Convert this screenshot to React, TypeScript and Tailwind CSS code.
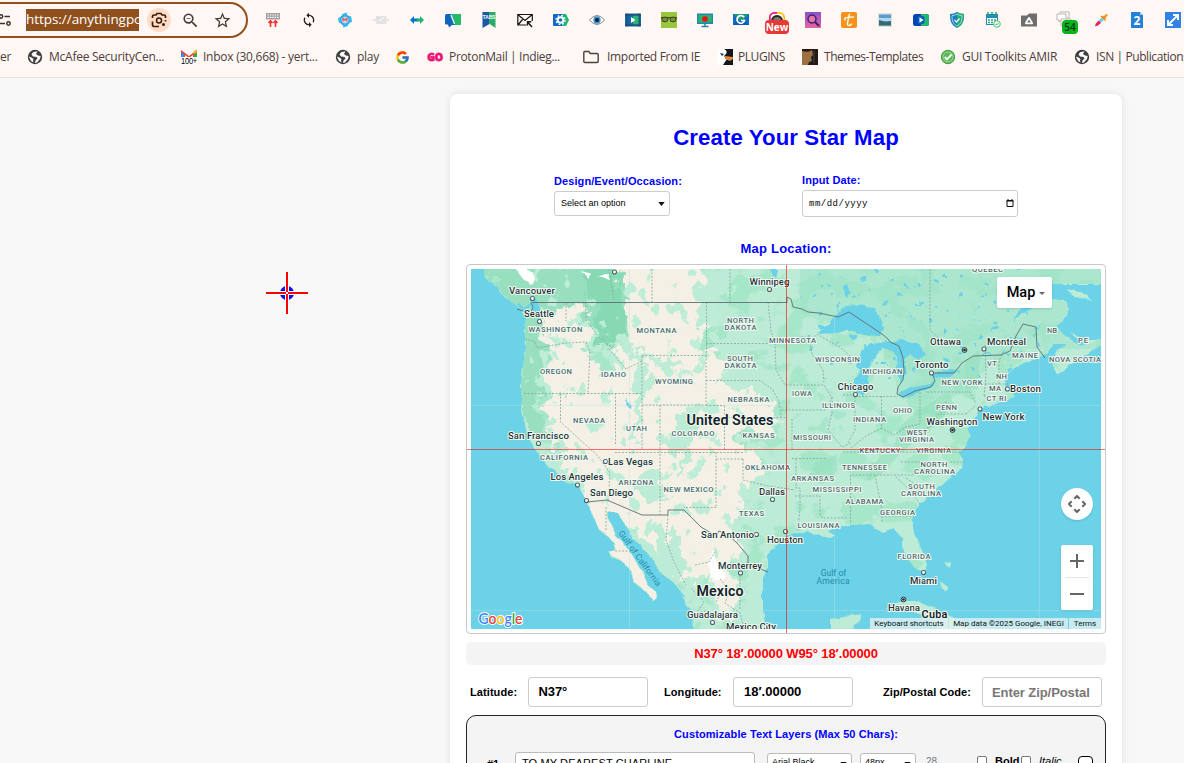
import React from 'react';
import { MdSync, MdStarBorder, MdZoomOut } from 'react-icons/md';
import { FcGoogle } from 'react-icons/fc';

type IconProps = { children: React.ReactNode; size?: number };

const Glyph = ({ children, size = 16 }: IconProps) => (
  <svg viewBox="0 0 16 16" width={size} height={size} className="shrink-0 overflow-visible">
    {children}
  </svg>
);

const Globe = () => (
  <Glyph>
    <circle cx="8" cy="8" r="7.2" fill="#3c4043" />
    <path d="M10.500 2.200 6 3.300 4.500 5.500 6 7.500 9.500 8 10.500 9.500 8.500 11.500 8 14l2-.5 3-3.500.7-3-2.700-.5-2-1.500zM1.800 7.500l2.700 1 2 1.500-.5 1.500.5 2-2.500-1.500z" fill="#fff8f5" />
  </Glyph>
);

const extensions: React.ReactNode[] = [
  <Glyph>
    <rect x="1" y="1" width="14" height="6.5" fill="#a3a3a3" />
    <path d="M2.5 3h11M2.5 5.3h11" stroke="#fff" strokeWidth="1.2" strokeDasharray="1.4 1" />
    <path d="M5.500 15V9M3.500 11l2-2.300 2 2.300M10.500 15V9M8.500 11l2-2.300 2 2.300" stroke="#f33434" strokeWidth="1.6" fill="none" />
  </Glyph>,
  <MdSync size={16} color="#26201e" />,
  <Glyph>
    <circle cx="8" cy="8" r="5.5" fill="#1aa5e8" />
    <path d="M5 2l5-1.500-.5 4H6zM1 6l4-1v5L2 11zM15 10l-4 1V5l3-1zM11 14l-5 1.500.5-4H10z" fill="#2eb4ef" />
    <circle cx="8" cy="8" r="3.5" fill="#c9cfe4" />
    <path d="M6 9.600V6.500L8 8l2-1.500v3.100" stroke="#da5964" strokeWidth="1.200" fill="none" />
  </Glyph>,
  <Glyph>
    <rect x="3" y="4" width="10.500" height="8" rx="1" fill="#e2e3e2" />
    <path d="m3.500 5 4.700 4L13 5M0 8h3m10.500 0H16" stroke="#ccd1d0" fill="none" />
    <path d="m6 7 2 2 4-4" stroke="#fff" fill="none" />
  </Glyph>,
  <Glyph>
    <path d="M1 8 5 4v2.500h4v3H5V12z" fill="#0874c5" />
    <path d="m15 8-4-4v2.500H8v3h3V12z" fill="#20b574" />
  </Glyph>,
  <Glyph>
    <path d="M1.500 2H15a1 1 0 0 1 1 1v9q0 1-1 1H7l-3 2.500-1-3H1Q0 12.500 0 11V3.500Q0 2 1.500 2z" fill="#1265bd" />
    <path d="M6 2h9a1 1 0 0 1 1 1v9q0 1-1 1H10z" fill="#26ba6d" />
    <path d="m6 3 3.500 9" stroke="#fff" strokeWidth="1.200" />
  </Glyph>,
  <Glyph>
    <path d="M1.500 0h7v12l-7 4z" fill="#1959a8" />
    <path d="M8 0h6.500v16L8 11.500z" fill="#2bad68" />
    <text x="8" y="7" fontSize="5.500" textAnchor="middle" textLength="12.500" lengthAdjust="spacingAndGlyphs" fontWeight="700" fill="#fff" fontFamily="Liberation Sans, sans-serif">TABS</text>
  </Glyph>,
  <Glyph>
    <path d="M9.500 13H.8V2.500h14.500V9M1 2.700l7 5.800 7-5.800M1 13l4.500-5.500" stroke="#151515" strokeWidth="1.200" fill="none" />
    <path d="M15 15 11 10.500M10.500 13.500V9.800h3.800" stroke="#151515" strokeWidth="1.400" fill="none" />
  </Glyph>,
  <Glyph>
    <path d="M1 2h8v12H1a1 1 0 0 1-1-1V3a1 1 0 0 1 1-1z" fill="#1265c3" />
    <path d="M9 2h4l3 6-3 6H9z" fill="#22b573" />
    <circle cx="7.500" cy="8" r="2.800" fill="none" stroke="#fff" strokeWidth="2" />
    <circle cx="7.500" cy="8" r="4.500" fill="none" stroke="#fff" strokeWidth="1.400" strokeDasharray="1.700 1.830" />
  </Glyph>,
  <Glyph>
    <path d="M.5 8Q8-1 15.500 8 8 17 .5 8z" fill="#fff" stroke="#5e666d" strokeWidth=".8" />
    <circle cx="8" cy="8" r="3.700" fill="#3f93cc" />
    <circle cx="8" cy="8" r="2" fill="#101d31" />
  </Glyph>,
  <Glyph>
    <path d="M0 1.500h16v13H0z" fill="#1766a8" />
    <path d="M8 3.500h6v9H8z" fill="#26b774" />
    <path d="M0 3h16M0 13h16M2 1.500v13m12-13v13" stroke="#25384d" strokeWidth=".7" />
    <path d="m6 5 4.500 3L6 11z" fill="#fff" />
  </Glyph>,
  <Glyph>
    <path d="M0 0h16v16H0z" fill="#98c63e" />
    <path d="M0 5h16v1.500H0z" fill="#435123" />
    <rect x="1" y="5.200" width="5.700" height="4.500" rx="2" fill="#7c8c40" stroke="#36441d" />
    <rect x="9.200" y="5.200" width="5.700" height="4.500" rx="2" fill="#7c8c40" stroke="#36441d" />
  </Glyph>,
  <Glyph>
    <rect y="1.500" width="16" height="10.500" fill="#2684b4" />
    <path d="M1.300 3h13.400v7.500H1.300z" fill="#2bb36c" />
    <path d="M4.500 14.500h7M8 12v2" stroke="#2684a4" strokeWidth="1.500" />
    <circle cx="8" cy="7" r="2.800" fill="#f00f18" />
  </Glyph>,
  <Glyph>
    <path d="M0 2h16v11H0z" fill="#126bc2" />
    <path d="m1 2h14l-4 6H5z" fill="#1d9c7d" />
    <path d="M0 13h16l-4-3H3z" fill="#075ab7" />
    <path d="M11 5.300a3.800 3.800 0 1 0 .5 3.200H8" fill="none" stroke="#fff" strokeWidth="1.700" />
  </Glyph>,
  <div className="relative flex h-6 w-6 items-start justify-center pt-1">
    <Glyph>
      <path d="M.8 8V5.500A4.800 4.800 0 0 1 5.500.8H8" stroke="#ed147b" strokeWidth="1.700" fill="none" />
      <path d="M8 .8h2.500a4.800 4.800 0 0 1 4.700 4.700V8" stroke="#ffc107" strokeWidth="1.700" fill="none" />
      <path d="M3 9a5 5 0 0 1 10 0" fill="#777" stroke="#252525" strokeWidth="2" />
    </Glyph>
    <span className="absolute left-0 top-3 flex h-[14px] w-6 items-center justify-center rounded-[4px] bg-[#e53935] font-['Open_Sans',sans-serif] text-[10px] font-bold leading-none text-white">New</span>
  </div>,
  <Glyph>
    <defs>
      <linearGradient id="violet" x2="0" y2="1"><stop stopColor="#8952c9" /><stop offset="1" stopColor="#e765a0" /></linearGradient>
    </defs>
    <path d="M0 0h16v16H0z" fill="url(#violet)" />
    <circle cx="7" cy="7" r="4" fill="#db70b0" stroke="#42206e" strokeWidth="1.500" />
    <path d="m10 10 4 4" stroke="#39205f" strokeWidth="2" />
    <circle cx="7" cy="7" r="1.600" fill="#f17c89" />
  </Glyph>,
  <Glyph>
    <rect width="16" height="16" rx="2" fill="#f6911d" />
    <path d="M8.500 2.200 6.500 11q-.6 3.500 3 2l1-1M4 8q-1-2.500 2-2.500L12.500 5" fill="none" stroke="#fff6dc" strokeWidth="1.500" strokeLinecap="round" />
  </Glyph>,
  <Glyph>
    <path d="M1 1h14v14H1z" fill="#d9e1e2" />
    <path d="M2 2.500h12v11H2z" fill="#5b9bd0" />
    <path d="M2 6h12v3H2z" fill="#b2d8eb" />
    <path d="M2 8 9 10l5-1v4.500H2z" fill="#356c70" />
  </Glyph>,
  <Glyph>
    <rect y="2" width="16" height="12" rx="2.500" fill="#0645b7" />
    <path d="M8 2h5.500A2.500 2.500 0 0 1 16 4.500v7a2.500 2.500 0 0 1-2.500 2.500H8z" fill="#26b674" />
    <rect x="4.500" y="4" width="7" height="8" rx="2" fill="#0760b4" />
    <path d="m6.500 5.300 4 2.700-4 2.700z" fill="#fff" />
  </Glyph>,
  <Glyph>
    <path d="M8 0q3 2 7 2c0 7-1 11-7 14C2 13 1 9 1 2q4 0 7-2z" fill="#187fc3" />
    <path d="M8 0q3 2 7 2c0 7-1 11-7 14z" fill="#28a978" />
    <path d="M8 2q2 1.500 5 1.500C13 9 12 12 8 14 4 12 3 9 3 3.500Q6 3.500 8 2z" fill="none" stroke="#bde8ef" strokeWidth=".8" />
    <path d="m5.500 8 2 2L10.500 6.500" stroke="#e7fff5" strokeWidth="1.300" fill="none" />
  </Glyph>,
  <Glyph>
    <path d="M1 2h12v11H1z" fill="#208db5" />
    <path d="M2 6h10v6H2z" fill="#fff" />
    <path d="M3 8h8M3 10.500h8M3 0v4m4-4v4m4-4v4" stroke="#26a487" strokeWidth="1.500" strokeDasharray="2 1" />
    <circle cx="12" cy="12" r="3.300" fill="#ebfff0" stroke="#4bc37b" />
    <path d="m10.500 12 1 1 2-2" stroke="#3fae65" fill="none" />
  </Glyph>,
  <Glyph>
    <path d="M0 3.500h6l2-2h8v13H0z" fill="#706e6d" />
    <path d="m8 5.800 3.200 5.500H4.800z" fill="none" stroke="#fff" strokeWidth="1.700" strokeLinejoin="round" />
  </Glyph>,
  <div className="relative h-6 w-6">
    <svg viewBox="0 0 24 24" width="24" height="24">
      <path d="M7 5V4h9v6h-2M4 6h9v6H8l-2 2v-2H4z" fill="#fff" stroke="#b5b2b1" />
      <path d="M8 11h10v7H8z" fill="#fff" stroke="#b9b6b5" />
    </svg>
    <span className="absolute left-[9px] top-[12px] flex h-[14px] w-4 items-center justify-center rounded-[4px] bg-[#07b51a] font-['Open_Sans',sans-serif] text-[10px] font-semibold leading-none text-[#153015]">54</span>
  </div>,
  <Glyph>
    <path d="m9.500 4 3 3M8 4l4.500 4.500" stroke="#fd8b15" strokeWidth="1.500" />
    <path d="m10 5.500 2.500-3q1-1 1.800-.2t-.2 1.800l-2.700 2.700z" fill="#fd8b15" />
    <path d="M8.800 5.500 11 7.700 7.500 11 5 9z" fill="#70cce7" />
    <path d="M5.500 8.700 8 11 4.500 13.800 2 14.300l.7-2.500z" fill="#ef1b60" />
  </Glyph>,
  <Glyph>
    <path d="M2 0h9l3 3v13H2z" fill="#2680da" />
    <path d="m11 0 3 3h-3z" fill="#9cd3fa" />
    <text x="8" y="12.500" textAnchor="middle" fontSize="12" fontWeight="700" fill="#fff" fontFamily="Open Sans, sans-serif">2</text>
  </Glyph>,
  <Glyph>
    <path d="M0 0h16v16H0z" fill="#3083e4" />
    <path d="m3.500 12.500 9-9M8 3h5v5M3 8v5h5" stroke="#fff" strokeWidth="1.900" fill="none" />
  </Glyph>,
];

type Bookmark = { icon: React.ReactNode; label: string; box: string; text: string };

const bookmarks: Bookmark[] = [
  { icon: <Globe />, label: 'McAfee SecurityCen...', box: 'w-[154px]', text: '' },
  {
    icon: (
      <Glyph>
        <path d="M0 9V1l8 6 8-6v8h-4V6L8 9 4 6v3z" fill="#ea4335" />
        <path d="M0 3l3 2v4H0z" fill="#4285f4" /><path d="m16 3-3 2v4h3z" fill="#34a853" /><path d="m16 3-3 2V2l2-1z" fill="#fbbc05" />
        <path d="M0 8h16v7H0z" fill="#fff" />
        <text x="8" y="15" fontSize="8.500" textAnchor="middle" textLength="16" lengthAdjust="spacingAndGlyphs" fill="#000" fontFamily="Liberation Sans, sans-serif">100+</text>
      </Glyph>
    ),
    label: 'Inbox (30,668) - yert...', box: 'w-[154px]', text: '',
  },
  { icon: <Globe />, label: 'play', box: 'w-[60px]', text: '' },
  { icon: <FcGoogle size={15} />, label: '', box: 'w-8', text: '' },
  {
    icon: <Glyph><text x="8" y="12" fontSize="11" textAnchor="middle" textLength="15.500" lengthAdjust="spacingAndGlyphs" fill="#eb1478" stroke="#eb1478" strokeWidth=".8" fontWeight="900" fontFamily="Open Sans, sans-serif">GO</text></Glyph>,
    label: 'ProtonMail | Indieg...', box: 'w-[156px]', text: 'tracking-[-0.34px]',
  },
  { icon: <Glyph><path d="M.8 3.500q0-1 1-1h4l1.500 2H14q1.200 0 1.200 1v7q0 1-1.200 1H2q-1.200 0-1.200-1z" fill="none" stroke="#4b423e" strokeWidth="1.400" /></Glyph>, label: 'Imported From IE', box: 'w-[134px]', text: 'ml-0.5 tracking-[-0.3px]' },
  {
    icon: <Glyph><path d="M0 0h16v16H0z" fill="#15151b" /><path d="M0 0h7q4 2 2 5l-2 2 3 3-2 3-2 3H0z" fill="#fff" /><path d="m8 7 8 1v2l-3 2-5-2z" fill="#dc8739" /><path d="m3 4 4 1-2 2z" fill="#20222a" /></Glyph>,
    label: 'PLUGINS', box: 'w-[85px]', text: '-ml-px tracking-[-0.45px]',
  },
  {
    icon: <Glyph><path d="M0 0h16v16H0z" fill="#231a18" /><path d="M0 2q7 2 10-1l1 5-2 2 1 4-3 1-1 3H0z" fill="#9c7042" /><path d="M12 2v12" stroke="#464142" /></Glyph>,
    label: 'Themes-Templates', box: 'w-[138px]', text: 'tracking-[-0.45px]',
  },
  {
    icon: <Glyph><circle cx="8" cy="8" r="6.700" fill="#58b957" stroke="#459c48" /><circle cx="8" cy="8" r="5" fill="none" stroke="#b7e3ae" strokeWidth=".7" /><path d="m4.800 8 2.200 2.400L11.500 5.500" stroke="#fff" strokeWidth="1.900" fill="none" /></Glyph>,
    label: 'GUI Toolkits AMIR', box: 'w-[134px]', text: 'tracking-[-0.27px]',
  },
  { icon: <Globe />, label: 'ISN | Publications', box: 'w-[140px]', text: 'tracking-[-0.4px]' },
];

const BrowserBar = () => (
  <header className="h-[78px] w-full overflow-hidden border-b border-[#eaded9] bg-[#fff7f4]">
    <div className="flex h-10 items-center">
      <div className="-ml-8 flex h-9 w-[280px] shrink-0 items-center rounded-full border-2 border-[#8f501d] pl-[30px]">
        <svg viewBox="0 0 14 14" width="14" height="14" className="-ml-0.5 mr-[14px] shrink-0" fill="none" stroke="#3f302a" strokeWidth="1.500">
          <circle cx="3" cy="3.500" r="1.700" /><path d="M6.500 3.500H12M1 10.500h6" /><circle cx="10.500" cy="10.500" r="1.700" />
        </svg>
        <span className="h-[22px] w-[113px] shrink-0 overflow-hidden whitespace-nowrap bg-[#8f501d] font-['Open_Sans','Noto_Sans',sans-serif] text-[13.500px] leading-[21px] tracking-[-0.05px] text-white">https://anythingpod</span>
        <span className="ml-2 flex h-6 w-6 shrink-0 items-center justify-center rounded-full bg-[#ffdcc7]">
          <Glyph>
            <path d="M1.500 6V4.500Q1.500 3 3 3h2l1-1.500h4L11 3h2q1.500 0 1.500 1.500V6M1.500 9.500V13q0 1.500 1.500 1.500h5M14.500 8v1.500" fill="none" stroke="#3b1d08" strokeWidth="1.700" />
            <circle cx="8" cy="8.500" r="2.500" fill="none" stroke="#3b1d08" strokeWidth="1.500" /><circle cx="12.500" cy="12.500" r="1.500" fill="#3b1d08" />
          </Glyph>
        </span>
        <MdZoomOut size={19} color="#4a3c37" className="ml-[10px] shrink-0" />
        <MdStarBorder size={19} color="#4a3c37" className="ml-[13px] shrink-0" />
      </div>
      <div className="ml-[7px] flex shrink-0">
        {extensions.map((icon, i) => (
          <div key={i} className="flex h-10 w-9 shrink-0 items-center justify-center">{icon}</div>
        ))}
      </div>
    </div>
    <nav className="flex h-[34px] items-center whitespace-nowrap font-['Open_Sans','Noto_Sans',sans-serif] text-[12px] tracking-[-0.25px] text-[#4b403d]">
      <span className="w-[27px] shrink-0">er</span>
      {bookmarks.map((b, i) => (
        <div key={i} className={`${b.box} flex shrink-0 items-center gap-1.5`}>
          {b.icon}
          <span className={b.text}>{b.label}</span>
        </div>
      ))}
    </nav>
  </header>
);

type Label = [string, number, number, number];

const stateLabels: Label[] = [
  ['WASHINGTON', 555.500, 332, 54], ['MONTANA', 656.500, 333, 40], ['OREGON', 556, 374, 32], ['IDAHO', 613.500, 377, 25],
  ['WYOMING', 674, 384, 38], ['NEVADA', 589, 423, 32], ['UTAH', 636.500, 431, 21], ['COLORADO', 693, 436, 43],
  ['NORTH', 740.500, 323, 27], ['DAKOTA', 740.500, 330, 32], ['SOUTH', 740, 361, 26], ['DAKOTA', 740.500, 368, 32],
  ['MINNESOTA', 792.500, 343, 47], ['WISCONSIN', 837.500, 362, 45], ['MICHIGAN', 882.500, 374, 40], ['NEBRASKA', 748.500, 402, 42],
  ['IOWA', 802, 396, 20], ['ILLINOIS', 838.500, 408, 33], ['INDIANA', 869.500, 422, 33], ['OHIO', 902.500, 413, 19],
  ['KANSAS', 758.500, 438, 32], ['MISSOURI', 812, 440, 38], ['KENTUCKY', 880, 453, 41], ['VIRGINIA', 933.500, 453, 35],
  ['WEST', 917, 435, 21], ['VIRGINIA', 916.500, 442, 35], ['PENN', 946.500, 410, 21], ['NEW YORK', 962, 385, 41],
  ['VT', 992, 366, 10], ['NH', 1001.500, 379, 11], ['MA', 995, 391, 12], ['CT RI', 996.500, 401, 20],
  ['MAINE', 1025, 358, 26], ['NB', 1052, 333, 10], ['PE', 1083, 343, 10], ['NOVA SCOTIA', 1075, 362, 52], ['QUEBEC', 987.500, 272, 31],
  ['CALIFORNIA', 564, 460, 48], ['ARIZONA', 636, 485, 35], ['NEW MEXICO', 688.500, 492, 50], ['OKLAHOMA', 767.500, 470, 45],
  ['ARKANSAS', 812.500, 481, 43], ['TENNESSEE', 864.500, 470, 45], ['MISSISSIPPI', 837, 492, 49], ['ALABAMA', 864.500, 504, 38],
  ['GEORGIA', 897.500, 515, 35], ['NORTH', 934, 467, 27], ['CAROLINA', 934.500, 474, 41], ['SOUTH', 921.500, 489, 27],
  ['CAROLINA', 921, 496, 40], ['TEXAS', 751.500, 516, 25], ['LOUISIANA', 818.500, 528, 42], ['FLORIDA', 914, 559, 33],
];

const cityLabels: Label[] = [
  ['Vancouver', 532, 294, 46], ['Seattle', 539, 317, 30], ['Winnipeg', 769.500, 285, 40], ['San Francisco', 538.500, 439, 61],
  ['Chicago', 855.500, 390, 36], ['Ottawa', 945.500, 345, 31], ['Montreal', 1006.500, 345, 39], ['Toronto', 931.500, 368, 34],
  ['Boston', 1025.500, 392, 31], ['New York', 1003.500, 420, 42], ['Washington', 952, 425, 51], ['Las Vegas', 630.500, 465, 45],
  ['Los Angeles', 577, 480, 53], ['San Diego', 611.500, 496, 43], ['Dallas', 772, 495, 26], ['San Antonio', 727.500, 538, 53],
  ['Houston', 785, 543, 36], ['Monterrey', 740, 569, 44], ['Guadalajara', 712.500, 618, 51], ['Mexico City', 751, 630, 50],
  ['Havana', 904, 611, 32], ['Miami', 923.500, 584, 27],
];

const dots: [number, number][] = [
  [532.500, 298.500], [539.500, 321.500], [769.500, 289.500], [614.500, 272], [538.500, 443.500], [855.500, 394.500], [984, 349],
  [931.500, 373], [1007.500, 389], [980, 409], [605.500, 461.500], [577.500, 485], [586.500, 500.500], [772.500, 499.500],
  [756.500, 534.500], [785.500, 531.500], [740.500, 573], [712.500, 622.500], [923.500, 572.500],
];

const land =
  'M484 264 L484 276 489 281 497 286 503 295 512 302 521 309 526 319 525 330 526 347 523 366 521 385 522 399 521 411 525 425 528 438 538 451 548 467 558 473 566 482 578 484 586 500 594 517 599 530 614 542 616 550 608 552 611 557 623 562 632 572 633 582 646 592 653 601 657 598 656 592 648 585 643 573 634 558 626 545 616 535 608 518 608 511 618 513 624 523 633 538 653 558 659 572 673 582 686 598 680 595 692 612 697 634 767 634 763 612 763 578 767 568 767 555 777 545 787 535 807 532 820 535 829 538 835 536 828 530 843 525 857 525 870 524 883 532 893 528 902 538 902 548 910 562 917 570 923 573 927 565 923 552 915 533 912 523 913 512 920 505 937 490 950 478 962 470 963 458 958 452 966 445 970 435 967 428 973 419 978 412 984 406 1000 401 1015 397 1010 391 1005 386 1007 375 1015 367 1037 359 1045 354 1053 344 1067 344 1057 350 1052 365 1057 374 1070 365 1090 352 1106 342 1106 337 1081 346 1067 338 1057 326 1068 312 1067 302 1053 299 1037 305 1023 314 1013 325 1018 312 1032 296 1050 284 1106 284 1106 264Z';

const lakes = [
  'M817 334 830 322 840 312 848 305 860 304 867 308 875 309 880 318 883 328 880 336 863 335 853 331 847 330 836 333Z',
  'M856 392 855 380 860 370 856 365 862 350 872 344 886 342 893 346 892 351 882 349 873 359 868 370 869 386 863 395Z',
  'M886 342 902 340 919 345 926 354 918 361 910 354 905 360 907 373 902 382 894 370 898 364 895 353Z',
  'M897 395 910 387 925 384 934 381 932 386 913 396 901 398Z',
  'M931 375 939 371 952 369 957 372 950 377 936 379Z',
  'M530 302 536 299 540 309 537 318 533 313Z',
  'M625 399 632 405 631 409 626 406Z',
  'M843 286 848 284 851 293 846 298Z',
  'M771 269 778 269 776 278 773 276Z',
];

const desert =
  'M538 332 550 320 560 308 574 305 586 316 590 330 585 344 592 360 600 370 615 372 620 360 612 345 622 352 633 358 640 350 630 338 625 320 630 302 617 285 617 264 706 264 697 288 690 302 700 322 704 350 720 354 728 370 716 384 740 388 768 402 781 421 770 434 735 430 741 450 762 452 758 474 745 490 742 510 735 540 739 553 725 570 741 590 734 624 721 618 718 600 704 579 686 579 672 575 660 558 640 538 624 523 618 512 603 511 588 501 576 482 563 470 560 450 548 425 551 390 548 370 546 350Z';

const baja =
  'M587 503 607 502 608 518 616 535 626 545 634 558 643 573 648 585 656 592 657 598 653 602 646 592 633 582 632 572 623 562 608 552 616 548 614 542 599 530Z';

const borders = [
  'M566 302.500V321 M586 302V320L597 335 612 348 609 349 626 369 642 361M642 355.500H706M706.500 302V355M706 355V405H642V355M642 405V449M660 405V515M524 393.500H642M560.500 393V422L598 456 610 473 608 502M615.500 393V445M615 452.500H743M525 339 534 341 537 348 566 343 586 342 590 352 588 393',
  'M706 343.500H769M706 380.500H760L772 389 779 401 781 417M724.500 405.500V450M724 417.500H786M706 405.500H724M706 418H724M768 302 771 331 775 342 776 370 785 385H824L832 398 825 410H781M810 342 812 354 823 370 824 383M810 342 817 334 841 348 855 360M832 397V413L828 430 842 447 851 443',
  'M792 419V450M792 458.500H827M843 395H855V430L848 443M855 396.500H898M881.500 396V428L866 436 851 448M881 428 894 435 906 427 920 424 920 391M843 452H963M852 475H912L942 464M850.500 475V524M875 475 882 510V522M796 459V488H800L800 508 798 530M795 496H820V514L822 518H848M716 452V507M743 459V480L768 486 795 490M743 459H716M716 507.500H684M606 507V530',
  'M927 392H970L976 404M920 431 930 427 938 414H966M966 414 975 406M985 345 986 376 984 396M999 384V361L1004 350M985 384H1008M984 396H1005M946 401V412M930 269V330L946 345M885 516H912M901 462H964M906 478 920 488 927 498M920 504 910 490 896 477M609 269 614 300M652 269V302M730 269V302M615 551H632M668 515 666 540 674 562 686 585M695 565 709 562 716 550M716 602 724 588 741 590M740 565V610M691 588 704 602 696 614 708 610M720 579 730 590 725 603 740 613 744 628',
];

const StarMap = () => (
  <svg viewBox="471 269 630 360" width="630" height="360" className="block" fontFamily="Roboto, sans-serif">
    <defs>
      <clipPath id="landClip"><path d={land} /></clipPath>
      <filter id="rough" x="-5%" y="-5%" width="110%" height="110%">
        <feTurbulence type="fractalNoise" baseFrequency=".09" numOctaves="3" seed="4" result="n" />
        <feDisplacementMap in="SourceGraphic" in2="n" scale="5" xChannelSelector="R" yChannelSelector="G" />
      </filter>
      <filter id="desertEdge" x="-5%" y="-5%" width="110%" height="110%">
        <feTurbulence type="fractalNoise" baseFrequency=".07" numOctaves="4" seed="12" result="n" />
        <feDisplacementMap in="SourceGraphic" in2="n" scale="32" xChannelSelector="R" yChannelSelector="G" />
      </filter>
      <filter id="patches" x="0" y="0" width="100%" height="100%" colorInterpolationFilters="sRGB">
        <feTurbulence type="fractalNoise" baseFrequency=".032 .04" numOctaves="4" seed="7" />
        <feColorMatrix values="0 0 0 0 .65  0 0 0 0 .9  0 0 0 0 .79  14 0 0 0 -7.500" />
      </filter>
      <filter id="scrub" x="0" y="0" width="100%" height="100%" colorInterpolationFilters="sRGB">
        <feTurbulence type="fractalNoise" baseFrequency=".075 .06" numOctaves="4" seed="21" />
        <feColorMatrix values="0 0 0 0 .74  0 0 0 0 .93  0 0 0 0 .84  0 18 0 0 -11.100" />
      </filter>
      <filter id="ponds" x="0" y="0" width="100%" height="100%" colorInterpolationFilters="sRGB">
        <feTurbulence type="fractalNoise" baseFrequency=".12" numOctaves="3" seed="31" />
        <feColorMatrix values="0 0 0 0 .42  0 0 0 0 .82  0 0 0 0 .91  0 0 20 0 -14" />
      </filter>
    </defs>
    <path d="M471 269h630v360H471z" fill="#6bd2e8" />
    <g filter="url(#rough)"><path d={land} fill="#bcebd6" /></g>
    <g clipPath="url(#landClip)">
      <rect x="471" y="269" width="630" height="360" filter="url(#patches)" />
      <path d="M800 269h301v80h-90l-60 50h-50l-20-60-80-25z" fill="#a0e2c8" opacity=".6" />
      <g filter="url(#desertEdge)">
        <path d="M471 260H619L628 300 624 344 604 350 594 323 574 307 550 311 545 345 540 385 543 440 522 420 521 315Z" fill="#98dfbf" />
        <path d="M583 260H613L615 297 628 319 615 347 598 344 597 320Z" fill="#87d9b4" />
      </g>
      <g filter="url(#desertEdge)">
        <path d={desert} fill="#f4f0e5" />
        <path d="M643 360 650 370 648 390 635 423 639 440 629 436 634 400 636 375ZM660 445 672 434 680 413 696 404 701 422 690 448 681 469 675 453ZM629 478 651 476 673 495 662 502 636 490ZM651 520 668 521 674 545 686 575 680 583 660 561ZM648 350 657 366 667 358 686 373 665 370Z" fill="#bcebd6" />
      </g>
      <rect x="530" y="269" width="230" height="360" filter="url(#scrub)" />
      <path d={baja} fill="#f4f0e5" filter="url(#rough)" />
      <path d="M898 430 917 410 948 393 954 405 930 430 902 451 884 473 867 481 870 464 893 450ZM816 462 837 455 835 475 822 484 809 476ZM965 361 980 350 978 390 966 391Z" fill="#91debb" opacity=".55" filter="url(#rough)" />
      <path d="M516 269 528 269 536 277 531 284 523 279ZM582 271 592 274 588 279ZM598 276 608 274 610 280ZM714 549 717 565 727 575 723 580 710 578 708 564Z" fill="#fff" filter="url(#rough)" />
      <rect x="800" y="269" width="240" height="110" filter="url(#ponds)" />
    </g>
    <path d="M518 304 530 316M524 310 531 304" stroke="#6bd2e8" strokeWidth="2.500" fill="none" />
    <g fill="#6bd2e8" filter="url(#rough)">{lakes.map((d) => <path key={d} d={d} />)}</g>
    <g fill="#bcebd6" filter="url(#rough)">
      <path d="M884 609 900 601 918 601 940 611 952 617 975 629H940L925 617 903 607Z" />
      <path d="M830 629 830 620 842 617 862 614 858 622 853 629Z" />
      <path d="M1066 289 1080 292 1091 300 1080 299ZM1070 332 1084 339 1100 339 1086 345ZM940 580 947 587 946 592 941 586ZM944 563 951 564 950 569ZM980 404 1000 403 989 408Z" />
    </g>
    <path d="M471 405.500h630M471 610.500h630M629.500 269v360M834.500 269v360M1039.500 269v360" stroke="#b6e5e5" strokeWidth=".7" opacity=".55" />
    <g fill="none" stroke="#83a59a" strokeWidth=".8" strokeDasharray="2 1.500">
      {borders.map((d) => <path key={d} d={d} />)}
    </g>
    <g fill="none" stroke="#5c6f70" strokeWidth=".9">
      <path d="M517 309 523 311M531 302.500 533 307 531 312M532 302.500H787L787 297 791 299 793 307 802 309 808 312 819 313 838 317 849 312 882 334 888 339 890 342 899 346 903 358 904 371 903 380 898 387 897 394 903 397 915 391 931 387 935 381 932 373H954L962 363 973 356 1001 355 1010 351 1016 336 1023 324 1036 327 1037 347 1045 358" />
      <path d="M587 502 607 500 642 515H668V510H684L701 527 716 536 719 531 728 535 737 543 748 556V564L768 572" />
    </g>
    <g fill="#fff" stroke="#506268" strokeWidth="1.100">
      {dots.map(([x, y]) => <circle key={`${x}-${y}`} cx={x} cy={y} r="2" />)}
    </g>
    {[[964.500, 350], [952.500, 430], [903.500, 599.500]].map(([x, y]) => (
      <g key={x}><circle cx={x} cy={y} r="2.400" fill="#d3e3dd" stroke="#26353a" /><circle cx={x} cy={y} r="1.300" fill="#1b292e" /></g>
    ))}
    <g textAnchor="middle" stroke="#effaf3" strokeWidth="2" strokeLinejoin="round" paintOrder="stroke">
      <g fill="#52666a" fontSize="7.600" fontWeight="500">
        {stateLabels.map(([t, x, y, w]) => <text key={`${t}${x}${y}`} x={x} y={y} textLength={w}>{t}</text>)}
      </g>
      <g fill="#283237" fontSize="9.700" fontWeight="500">
        {cityLabels.map(([t, x, y, w]) => <text key={t} x={x} y={y} textLength={w}>{t}</text>)}
      </g>
      <g fill="#172127" fontWeight="600">
        <text x="730" y="425" fontSize="14.400" textLength="87">United States</text>
        <text x="720" y="596" fontSize="14.200" textLength="47">Mexico</text>
        <text x="934.500" y="618" fontSize="11" textLength="26">Cuba</text>
      </g>
    </g>
    <g textAnchor="middle" fill="#258baa" fontSize="8.500">
      <text x="833.500" y="576">Gulf of</text><text x="833" y="584" textLength="33">America</text>
      <text x="637.500" y="560" transform="rotate(54 637.500 560)" textLength="66">Gulf of California</text>
    </g>
    <text x="478.500" y="623.500" fontSize="15" fontFamily="Lato, sans-serif" fontWeight="600" textLength="44" lengthAdjust="spacingAndGlyphs" stroke="#fff" strokeWidth="2" paintOrder="stroke">
      <tspan fill="#4285f4">G</tspan><tspan fill="#ea4335">o</tspan><tspan fill="#fbbc05">o</tspan><tspan fill="#4285f4">g</tspan><tspan fill="#34a853">l</tspan><tspan fill="#ea4335">e</tspan>
    </text>
  </svg>
);

const Caret = () => (
  <svg viewBox="0 0 8 5" width="7" height="4" className="shrink-0"><path d="M0 0h8L4 5z" fill="#111" /></svg>
);

const MapPanel = () => (
  <div className="relative mt-2 h-[370px] rounded-[4px] border border-[#c8c8c8] p-1">
    <StarMap />
    <div className="absolute left-[530px] top-3 flex h-[31px] w-[55px] items-center justify-center gap-1 rounded-[2px] bg-white pl-[3px] pt-px font-[Roboto,sans-serif] text-[14.500px] font-medium text-black shadow-sm">
      Map
      <svg viewBox="0 0 6 3" width="6" height="3" className="shrink-0"><path d="M0 0h6L3 3z" fill="#666" /></svg>
    </div>
    <div className="absolute left-[594px] top-[223px] flex h-8 w-8 items-center justify-center rounded-full bg-white shadow">
      <svg viewBox="0 0 18 18" width="18" height="18" fill="none" stroke="#666" strokeWidth="2"><path d="m6.300 3.700 2.700-2.700 2.700 2.700M6.300 14.300l2.700 2.700 2.700-2.700M3.700 6.300 1 9l2.700 2.700M14.300 6.300 17 9l-2.700 2.700" /></svg>
    </div>
    <div className="absolute left-[594px] top-[280px] flex h-[65px] w-8 flex-col items-center rounded-[2px] bg-white shadow">
      <svg viewBox="0 0 14 14" width="14" height="32" stroke="#666" strokeWidth="2"><path d="M0 7h14M7 0v14" /></svg>
      <div className="h-px w-6 bg-[#e6e6e6]" />
      <svg viewBox="0 0 14 14" width="14" height="32" stroke="#666" strokeWidth="2"><path d="M0 7h14" /></svg>
    </div>
    <div className="absolute bottom-1 right-1 flex h-[11px] items-center whitespace-nowrap font-[Roboto,sans-serif] text-[8px] leading-none text-[#111]">
      <span className="flex h-full w-[78px] items-center justify-center bg-[#e0f1f2]/80">Keyboard shortcuts</span>
      <span className="ml-px flex h-full w-[119px] items-center justify-center bg-[#e0f1f2]/80">Map data ©2025 Google, INEGI</span>
      <span className="ml-px flex h-full w-8 items-center justify-center bg-[#e0f1f2]/80">Terms</span>
    </div>
    <div className="absolute bottom-0 left-[319px] top-0 w-px bg-[#ff0000]/60" />
    <div className="absolute left-0 right-0 top-[184px] h-px bg-[#ff0000]/55" />
  </div>
);

const TextLayers = () => (
  <section className="mt-2 h-[120px] rounded-[10px] border border-[#242424] bg-[#f4f4f4] pt-3">
    <h3 className="text-center text-[11px] font-bold leading-[13px] tracking-[0.1px] text-[#0000ff]">Customizable Text Layers (Max 50 Chars):</h3>
    <div className="mt-[11px] flex items-start pl-5 text-[11px] leading-none text-black">
      <span className="mt-[7px] w-7 font-bold">#1</span>
      <div className="h-[25px] w-60 rounded-[3px] border border-[#bbb] bg-white px-1.5 pt-[5px] tracking-[0.1px]">TO MY DEAREST CHARLINE</div>
      <div className="ml-3 mt-px flex h-6 w-[85px] justify-between rounded-[3px] border border-[#bbb] bg-white px-1 pt-1 text-[9px]">Arial Black<span className="pt-1"><Caret /></span></div>
      <div className="ml-2 mt-px flex h-6 w-14 justify-between rounded-[3px] border border-[#bbb] bg-white px-1 pt-1 text-[9px]">48px<span className="pt-1"><Caret /></span></div>
      <span className="ml-[10px] mt-[5px] w-[51px] text-[10px] text-[#777]">28</span>
      <span className="mt-1 h-[10px] w-[10px] rounded-[2px] border border-[#777] bg-white" />
      <span className="ml-2 mt-1 w-[26px] font-bold">Bold</span>
      <span className="mt-1 h-[10px] w-[10px] rounded-[2px] border border-[#777] bg-white" />
      <span className="ml-2 mt-1 w-[39px] italic">Italic</span>
      <span className="mt-1 h-[15px] w-[15px] rounded-[4px] border-[1.500px] border-black bg-white" />
    </div>
  </section>
);

export default function App() {
  return (
    <div className="h-[763px] w-[1184px] overflow-hidden bg-[#f8f8f8] font-['Liberation_Sans',Arial,sans-serif]">
      <BrowserBar />
      <main className="flex items-start pt-4">
        <aside className="w-[450px] shrink-0">
          <svg viewBox="0 0 42 42" width="42" height="42" className="ml-[266px] mt-[178px]">
            <circle cx="21" cy="21" r="7" fill="#1010e8" />
            <path d="M0 21h42M21 0v42" stroke="#fff" strokeWidth="4" />
            <path d="M0 21h42M21 0v42" stroke="#f00" strokeWidth="2" />
            <path d="M20 20h2v2h-2z" fill="#fff" />
          </svg>
        </aside>
        <section className="h-[760px] w-[672px] shrink-0 rounded-[8px] bg-white px-4 pt-[31px] shadow-[0_0_9px_rgba(0,0,0,0.1)]">
          <h1 className="text-center text-[22.200px] font-bold leading-[26px] tracking-[0.1px] text-[#0000ff]">Create Your Star Map</h1>
          <div className="mt-[23px] flex h-[46px] pl-[88px]">
            <div className="w-[248px] text-[11px]">
              <div className="pt-px font-bold leading-[13px] tracking-[0.09px] text-[#0000ff]">Design/Event/Occasion:</div>
              <div className="mt-[3px] flex h-[25px] w-[116px] items-center justify-between rounded-[3px] border border-[#ccc] pl-1.5 pr-1 pt-px text-[9px]">Select an option<Caret /></div>
            </div>
            <div className="w-[216px] text-[11px]">
              <div className="font-bold leading-[13px] tracking-[0.09px] text-[#0000ff]">Input Date:</div>
              <div className="mt-[3px] flex h-[27px] items-center justify-between rounded-[3px] border border-[#ccc] pl-1.5 pr-[3px] font-['Liberation_Mono',monospace] text-[9px]">
                <span className="pt-0.5 tracking-[0.5px]">mm/dd/yyyy</span>
                <svg viewBox="0 0 8 8" width="8" height="8" className="mb-px"><path d="M1 1.500h6v6H1z" fill="none" stroke="#111" /><path d="M.5 2h7M2 0v2M6 0v2" stroke="#111" /></svg>
              </div>
            </div>
          </div>
          <h2 className="mt-5 h-4 text-center text-[13px] font-bold leading-[18px] tracking-[0.22px] text-[#0000ff]">Map Location:</h2>
          <MapPanel />
          <div className="mt-2 h-[23px] rounded-[5px] bg-[#f4f4f4] text-center text-[13px] font-bold leading-[23px] tracking-[-0.1px] text-[#ff0000]">N37° 18′.00000 W95° 18′.00000</div>
          <div className="mt-3 flex h-[30px] items-center pl-1 text-[11px] font-bold tracking-[0.08px] text-black">
            <span className="w-[58px]">Latitude:</span>
            <div className="flex h-full w-[120px] items-center rounded-[3px] border border-[#ccc] pl-[9.500px] text-[13px] tracking-[-0.1px]">N37°</div>
            <span className="ml-4 w-[69px]">Longitude:</span>
            <div className="flex h-full w-[120px] items-center rounded-[3px] border border-[#ccc] pl-[10px] text-[13px] tracking-[0px]">18′.00000</div>
            <span className="ml-[30px] w-[99px] whitespace-nowrap">Zip/Postal Code:</span>
            <div className="flex h-full w-[120px] items-center whitespace-nowrap rounded-[3px] border border-[#ccc] pl-[9px] pt-px text-[13px] tracking-[-0.08px] text-[#777]">Enter Zip/Postal</div>
          </div>
          <TextLayers />
        </section>
      </main>
    </div>
  );
}
